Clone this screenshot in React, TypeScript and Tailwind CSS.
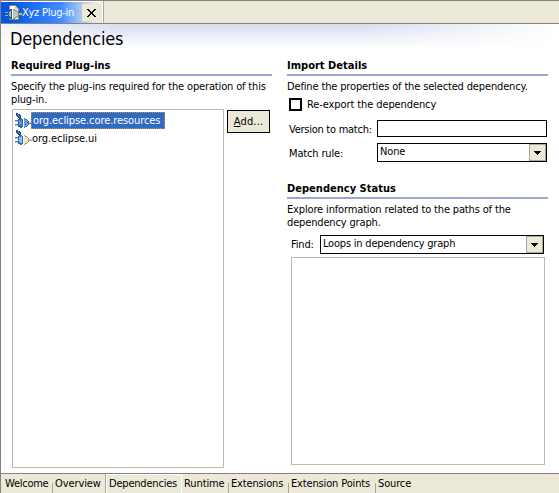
import React from "react";

function Plug({ dark }: { dark?: boolean }) {
  return (
    <svg width="17" height="16" viewBox="0 0 17 16" shapeRendering="crispEdges" className="shrink-0">
      <path d="M1 0h2v1h2v1h1v3H5v1H4V5H3V4H2V3H1z" fill="#174a8c" />
      <path d="M2 1h1v1h1v1h1v1H4V3H3V2H2z" fill="#5f95d6" />
      <path d="M0 7h4v1H0zM0 11h4v1H0z" fill="#4c7ab2" />
      <path d="M0 8h3v1H0zM0 12h3v1H0z" fill="#b9cfe6" />
      <path d="M3 6h2V5h2v1h1v8H7v1H5v-1H3z" fill={dark ? "#2c62a6" : "#2f6ab4"} />
      <path d="M4 7h2V6h1v7H5v-1H4z" fill={dark ? "#5f97d8" : "#8fc1f1"} />
      <path d="M9 5h1v1h2v1h1v1h1v4h-1v1h-1v1h-2v1H9z" fill={dark ? "#3a6fb0" : "#9b9b80"} />
      <path d="M9 6h1v1h2v1h1v4h-1v1h-2v1H9z" fill={dark ? "#6fa3de" : "#e9e6c8"} />
      <path d="M14 9h3v2h-3z" fill={dark ? "#5f8cbf" : "#b5a678"} />
      <path d="M14 9h3v1h-3z" fill={dark ? "#a9c2dd" : "#d9cfa0"} />
      {dark && <path d="M5 7h1v1H5zM5 11h1v1H5zM10 8h1v1h-1zM12 9h1v1h-1zM10 11h1v1h-1z" fill="#2a5fa3" />}
    </svg>
  );
}

function TabIcon() {
  return (
    <svg width="17" height="16" viewBox="0 0 17 16" shapeRendering="crispEdges" className="shrink-0">
      <path d="M4 0h7v1h1v1h1v1h1v12H4z" fill="#8b8569" />
      <path d="M5 1h5v3h3v10H5z" fill="#fffef4" />
      <path d="M10 1h1v1h1v1h1v1h-3z" fill="#d8cd9c" />
      <path d="M0 7h4v1H0zM0 10h4v1H0z" fill="#a9a78c" />
      <path d="M3 6h1V5h1V4h2v10H5v-1H4v-1H3z" fill="#31598f" />
      <path d="M4 7h1V6h1v6H5v-1H4z" fill="#8fb9e4" />
      <path d="M8 4h2v1h2v1h1v1h1v4h-1v1h-1v1h-2v1H8z" fill="#77806f" />
      <path d="M8 5h2v1h2v1h1v4h-1v1h-2v1H8z" fill="#b9c6c2" />
      <path d="M14 8h3v2h-3z" fill="#c9b87c" />
    </svg>
  );
}

function SectionTitle({ children }: { children: React.ReactNode }) {
  return (
    <h2 className="h-[17px] border-b-2 border-[#99a8cc] text-[11px] leading-[13px] font-bold tracking-[0.02px] whitespace-nowrap">
      {children}
    </h2>
  );
}

function Arrow() {
  return (
    <span className="flex h-[17px] w-[17px] items-center justify-center border border-[#aca899] bg-[#ece9d8]">
      <svg width="7" height="4" viewBox="0 0 7 4" shapeRendering="crispEdges">
        <path d="M0 0h7v1H6v1H5v1H4v1H3V3H2V2H1V1H0z" />
      </svg>
    </span>
  );
}

function Separator() {
  return <span className="mt-[9px] h-[10px] w-px shrink-0 bg-[#aca899]" />;
}

export default function App() {
  return (
    <div className="flex h-[493px] w-[559px] flex-col overflow-hidden border-t border-l border-[#848284] bg-white font-['DejaVu_Sans_Condensed','DejaVu_Sans',sans-serif] text-[11px] leading-[13px] tracking-[-0.15px] text-black">
      <div className="flex h-[23px] shrink-0 border-b border-[#848284] bg-[#ece9d8]">
        <div className="flex w-[102px] border-t border-r border-white bg-linear-to-r from-[#0055e5] from-10% via-[#3f8dff] via-60% to-[#ece9d8] to-92% pl-1">
          <div className="flex w-[77px] items-center">
            <TabIcon />
            <span className="pb-px tracking-[-0.26px] whitespace-nowrap text-white">Xyz Plug-in</span>
          </div>
          <span className="my-[2px] flex w-[19px] items-center justify-center bg-[#ece9d8]">
            <svg width="9" height="8" viewBox="0 0 9 8" shapeRendering="crispEdges">
              <path d="M0 0h2v1h1v1h1v1h1V2h1V1h1V0h2v1H8v1H7v1H6v2h1v1h1v1h1v1H7V7H6V6H5V5H4v1H3v1H2v1H0V7h1V6h1V5h1V3H2V2H1V1H0z" />
            </svg>
          </span>
        </div>
        <span className="w-px bg-[#aca899]" />
      </div>
      <main className="flex h-[449px] shrink-0 flex-col">
        <header className="h-[35px] shrink-0 bg-linear-to-b from-[#d8ddee] to-white to-70%">
          <div className="h-full bg-linear-to-r from-white/70 via-transparent via-20% to-transparent">
            <div className="h-full bg-linear-to-r from-transparent from-65% to-white pt-[5px] pl-[9px]">
              <h1 className="text-[18px] leading-[20px] tracking-[-0.16px] whitespace-nowrap">Dependencies</h1>
            </div>
          </div>
        </header>
        <div className="flex pl-[10px]">
          <section className="w-[261px]">
            <SectionTitle>Required Plug-ins</SectionTitle>
            <p className="pt-[4px] whitespace-nowrap">Specify the plug-ins required for the operation of this<br />plug-in.</p>
            <div className="flex pt-[3px] pl-px">
              <div className="h-[359px] w-[212px] border border-[#bdbaa7] pt-[2px] pl-[2px] tracking-[-0.08px]">
                <div className="flex h-[17px] items-center"><Plug dark /><span className="-ml-px h-[17px] w-[134px] border border-dotted border-[#ce943a] bg-[#316ac5] pl-px leading-[16px] whitespace-nowrap text-white">org.eclipse.core.resources</span></div>
                <div className="flex h-[18px] items-center"><Plug /><span className="whitespace-nowrap">org.eclipse.ui</span></div>
              </div>
              <button className="mt-px ml-[3px] h-[23px] w-[43px] border border-black bg-[#ece9d8] tracking-[0.15px]"><u>A</u>dd...</button>
            </div>
          </section>
          <section className="ml-[15px] w-[261px]">
            <SectionTitle>Import Details</SectionTitle>
            <p className="pt-[4px] whitespace-nowrap">Define the properties of the selected dependency.</p>
            <div className="mt-[5px] flex h-[13px] items-center gap-[5px] pl-[2px]"><span className="h-[13px] w-[13px] border-2 border-black" /><span className="tracking-[-0.1px]">Re-export the dependency</span></div>
            <div className="mt-[9px] flex h-[17px] items-center pl-[2px]"><span className="w-[88px] pt-px tracking-[-0.26px] whitespace-nowrap">Version to match:</span><span className="h-[17px] w-[170px] border border-black" /></div>
            <div className="mt-[6px] flex h-[19px] items-center pl-[2px]"><span className="w-[88px] pt-px">Match rule:</span><span className="flex h-[19px] w-[170px] justify-between border border-black pl-[2px] leading-[15px]">None<Arrow /></span></div>
            <div className="h-[20px]" />
            <SectionTitle>Dependency Status</SectionTitle>
            <p className="pt-[4px] whitespace-nowrap">Explore information related to the paths of the<br />dependency graph.</p>
            <div className="mt-[6px] flex h-[19px] items-center pl-[4px]"><span className="w-[29px]">Find:</span><span className="flex h-[19px] w-[224px] justify-between border border-black pl-[2px] leading-[15px] tracking-[-0.2px]">Loops in dependency graph<Arrow /></span></div>
            <div className="mt-[3px] ml-[4px] h-[208px] w-[254px] border border-[#bdbaa7]" />
          </section>
        </div>
      </main>
      <nav className="flex h-[20px] shrink-0 border-t border-[#848284] bg-[#ece9d8] leading-[20px] whitespace-nowrap">
        <span className="w-[51px] shrink-0 pl-[4px] tracking-[-0.25px]">Welcome</span>
        <Separator />
        <span className="w-[53px] shrink-0 pl-[2px] tracking-[-0.1px]">Overview</span>
        <span className="w-[76px] shrink-0 border-t border-r border-l border-t-white border-r-white border-l-white pl-[2px] leading-[18px] tracking-[-0.2px] shadow-[-1px_0_0_#aca899]">Dependencies</span>
        <span className="w-[46px] shrink-0 pl-[2px] tracking-[-0.1px]">Runtime</span>
        <Separator />
        <span className="w-[59px] shrink-0 pl-[2px] tracking-[-0.15px]">Extensions</span>
        <Separator />
        <span className="w-[86px] shrink-0 pl-[2px] tracking-[-0.15px]">Extension Points</span>
        <Separator />
        <span className="pl-[2px]">Source</span>
      </nav>
    </div>
  );
}
